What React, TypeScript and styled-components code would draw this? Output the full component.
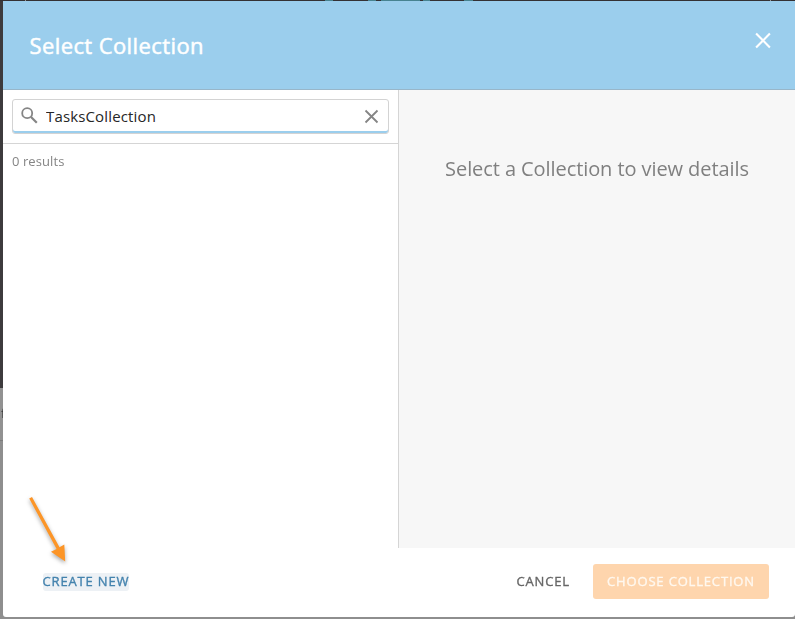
import React, { useState } from "react";
import styled, { createGlobalStyle } from "styled-components";

const GlobalStyle = createGlobalStyle`
  * { box-sizing: border-box; }
  body { margin: 0; font-family: "Open Sans", "Noto Sans", sans-serif; overflow: hidden; }
  button, input { font: inherit; }
`;

const Backdrop = styled.div`
  position: relative;
  width: 795px;
  height: 619px;
  padding: 1px 0 2px 3px;
  background: linear-gradient(#3d3b3d 388px, #929292 388px, #929292 440px, #7c7c7c 440px, #7c7c7c 441px, #8e8e8e 441px);
`;

const TopEdge = styled.svg`
  position: absolute;
  top: 0;
  left: 0;
`;

const PageText = styled.span`
  position: absolute;
  top: 405px;
  left: 1px;
  font-size: 13px;
  line-height: 16px;
  color: #333;
  will-change: transform;
`;

const Dialog = styled.section`
  position: relative;
  display: flex;
  flex-direction: column;
  height: 616px;
  overflow: hidden;
  background: #fff;
  border-radius: 0 0 3px 3px;
`;

const Header = styled.header`
  display: flex;
  justify-content: space-between;
  flex: 0 0 89px;
  padding: 0 23px 0 26.5px;
  background: #9bceed;
  border-bottom: 1px solid #98b6c9;
`;

const Title = styled.h1`
  margin: 28px 0 0;
  font-size: 22px;
  line-height: 32px;
  font-weight: 400;
  letter-spacing: 0.4px;
  -webkit-text-stroke: 0.5px #fff;
  color: #fff;
`;

const IconButton = styled.button<{ $top?: number }>`
  display: flex;
  align-self: flex-start;
  margin: ${({ $top = 0 }) => $top}px 0 0;
  padding: 0;
  border: 0;
  background: none;
`;

const Body = styled.main`
  display: flex;
  flex: 0 0 458px;
`;

const ListPane = styled.div`
  flex: 0 0 396px;
  border-right: 1px solid #d5d5d5;
`;

const SearchBar = styled.div`
  height: 54px;
  padding: 9px 9px 0;
  border-bottom: 1px solid #d5d5d5;
`;

const SearchField = styled.div`
  display: flex;
  align-items: flex-start;
  height: 35px;
  padding: 7px 9px 0 8px;
  border: 1px solid #d3d3d3;
  border-radius: 3px;
  box-shadow: inset 0 -2px #9bceed;
`;

const SearchInput = styled.input`
  flex: 1;
  min-width: 0;
  height: 24px;
  margin: -3px 0 0 8px;
  padding: 0;
  border: 0;
  outline: 0;
  background: none;
  font-size: 15px;
  letter-spacing: 0.15px;
  color: #262626;
`;

const ResultCount = styled.p`
  margin: 8px 9px;
  font-size: 13px;
  line-height: 18px;
  letter-spacing: 0.08px;
  color: #858585;
`;

const DetailPane = styled.div`
  flex: 1;
  padding-top: 65px;
  background: #f7f7f7;
  text-align: center;
  font-size: 20px;
  line-height: 28px;
  letter-spacing: -0.08px;
  color: #808080;
`;

const Footer = styled.footer`
  display: flex;
  align-items: center;
  flex: 1;
  padding: 0 26px 2px 39.5px;
`;

const TextButton = styled.button<{ $link?: boolean }>`
  height: 18px;
  margin: ${({ $link }) => ($link ? "0 auto 0 0" : "0 23px 0 0")};
  padding: 0 0 2px;
  border: 0;
  border-radius: 3px;
  background: ${({ $link }) => ($link ? "#edf1f5" : "none")};
  font-size: 13px;
  line-height: 16px;
  font-weight: 400;
  letter-spacing: 0.85px;
  -webkit-text-stroke: 0.35px currentColor;
  color: ${({ $link }) => ($link ? "#4483ae" : "#666")};
`;

const PrimaryButton = styled.button`
  width: 176px;
  height: 35px;
  padding: 0 0 2px;
  border: 0;
  border-radius: 3px;
  background: #fed5ad;
  font-size: 13px;
  font-weight: 400;
  letter-spacing: 0.83px;
  -webkit-text-stroke: 0.35px currentColor;
  color: #fff8ef;
`;

const Pointer = styled.svg`
  position: absolute;
  top: 490px;
  left: 20px;
  filter: drop-shadow(0 2px 2px rgba(0, 0, 0, 0.35));
`;

export default function App() {
  const [query, setQuery] = useState("TasksCollection");
  return (
    <>
      <GlobalStyle />
      <Backdrop>
        <TopEdge width="795" height="1">
          <path d="M0 0H795V1H0z" fill="#343134" />
          <path d="M325 0h8v1h-8zM368 0h8v1h-8zM381 0h39v1h-39zM423 0h7v1h-7zM464 0h9v1h-9z" fill="#478391" />
          <path d="M25 0h1v1h-1zM770 0h1v1h-1z" fill="#999" />
        </TopEdge>
        <PageText>f</PageText>
        <Dialog>
          <Header>
            <Title>Select Collection</Title>
            <IconButton $top={31} aria-label="Close">
              <svg width="18" height="17" viewBox="0 0 18 17">
                <path d="M2.1 1.6l13.8 13.8M15.9 1.6L2.1 15.4" stroke="#fff" strokeWidth="2.1" />
              </svg>
            </IconButton>
          </Header>
          <Body>
            <ListPane>
              <SearchBar>
                <SearchField>
                  <svg width="17" height="17" viewBox="0 0 17 17" fill="none" stroke="#858585">
                    <circle cx="6.2" cy="6.2" r="5" strokeWidth="1.8" />
                    <path d="M10 10l5.8 5.8" strokeWidth="2.2" />
                  </svg>
                  <SearchInput
                    aria-label="Search collections"
                    value={query}
                    onChange={(e) => setQuery(e.target.value)}
                  />
                  <IconButton $top={2} aria-label="Clear" onClick={() => setQuery("")}>
                    <svg width="15" height="15" viewBox="0 0 15 15">
                      <path d="M1.5 1.5l12 12M13.5 1.5l-12 12" stroke="#858585" strokeWidth="1.8" />
                    </svg>
                  </IconButton>
                </SearchField>
              </SearchBar>
              <ResultCount>0 results</ResultCount>
            </ListPane>
            <DetailPane>Select a Collection to view details</DetailPane>
          </Body>
          <Footer>
            <TextButton $link>CREATE NEW</TextButton>
            <TextButton>CANCEL</TextButton>
            <PrimaryButton disabled>CHOOSE COLLECTION</PrimaryButton>
          </Footer>
        </Dialog>
        <Pointer width="55" height="80" viewBox="20 490 55 80">
          <path d="M29.2 498.4L32 497L59.5 547.2L64.3 544.5L65.2 561.5L51 551.8L56.6 549z" fill="#fc9527" />
        </Pointer>
      </Backdrop>
    </>
  );
}
